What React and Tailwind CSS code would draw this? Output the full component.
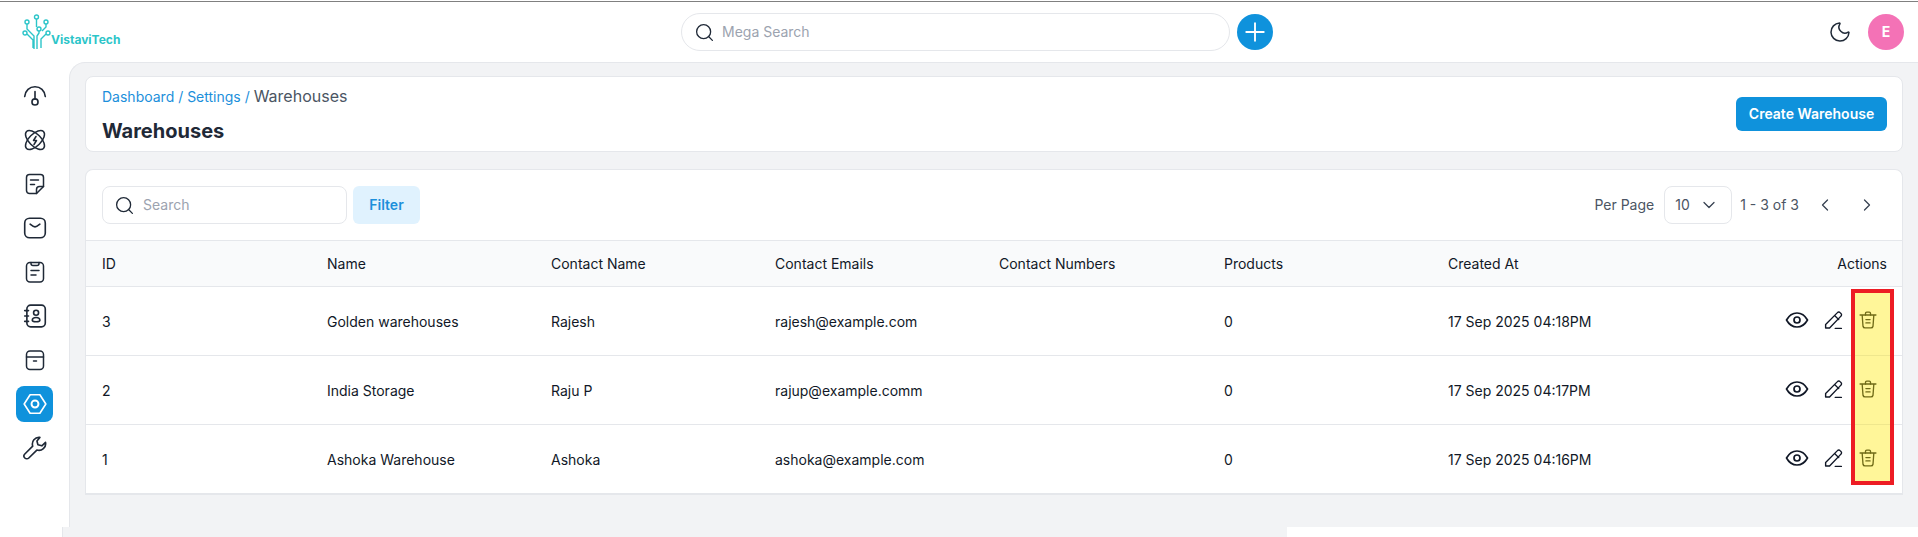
import React from 'react';
import { Search, Plus, Moon, ChevronDown, ChevronLeft, ChevronRight } from 'lucide-react';

const Svg = ({ children, size = 24, width = 1.5, className = '' }) => (
  <svg
    width={size}
    height={size}
    viewBox="0 0 24 24"
    fill="none"
    stroke="currentColor"
    strokeWidth={width}
    strokeLinecap="round"
    strokeLinejoin="round"
    className={className}
  >
    {children}
  </svg>
);

const GaugeIcon = () => (
  <Svg size={26}>
    <path d="M2.500 12.500C3 7 7 3.500 12 3.500s9 3.500 9.500 9" />
    <path d="M12 8v7" />
    <circle cx="12" cy="17.500" r="2.800" />
  </Svg>
);

const AtomIcon = () => (
  <Svg>
    <ellipse cx="12" cy="12" rx="12" ry="6" transform="rotate(45 12 12)" />
    <ellipse cx="12" cy="12" rx="12" ry="6" transform="rotate(-45 12 12)" />
    <path d="M13 8.500l-2.500 4h3l-2.500 4" />
  </Svg>
);

const NoteIcon = () => (
  <Svg>
    <path d="M13.500 21.500H6.500a3 3 0 0 1-3-3v-13a3 3 0 0 1 3-3h11a3 3 0 0 1 3 3v9z" />
    <path d="M20.500 14.500h-4a3 3 0 0 0-3 3v4" />
    <path d="M7.500 8h8M7.500 12.500h4" />
  </Svg>
);

const MailIcon = () => (
  <Svg size={26}>
    <rect x="2.500" y="3" width="19" height="18" rx="4.500" />
    <path d="M7.500 8.500c1.500 1.200 3 2.500 4.500 2.500s3-1.300 4.500-2.500" />
  </Svg>
);

const ClipboardIcon = () => (
  <Svg>
    <rect x="3.500" y="2.500" width="17" height="19.500" rx="3.500" />
    <path d="M8 2.500v1a2 2 0 0 0 2 2h4a2 2 0 0 0 2-2v-1" />
    <path d="M8 10.500h8M8 15h5" />
  </Svg>
);

const ContactIcon = () => (
  <Svg size={26}>
    <rect x="4.500" y="2" width="17" height="20" rx="3.500" />
    <circle cx="13" cy="9" r="2.300" />
    <path d="M9.500 16c0-1.800 1.500-2.600 3.500-2.600s3.500.8 3.500 2.600-7 1.800-7 0z" />
    <path d="M2.500 7h3.500M2.500 12h3.500M2.500 17h3.500" />
  </Svg>
);

const BoxIcon = () => (
  <Svg>
    <rect x="3.500" y="3" width="17" height="18.500" rx="3.500" />
    <path d="M3.500 9h17M10.500 13h3" />
  </Svg>
);

const HexIcon = () => (
  <Svg size={26}>
    <path d="M7.500 3.500h9L22 12l-5.500 8.500h-9L2 12z" />
    <circle cx="12" cy="12" r="3.200" strokeWidth="1.800" />
  </Svg>
);

const WrenchIcon = () => (
  <Svg size={26}>
    <path d="M16.500 2.200a6.200 6.200 0 0 0-6.600 8.100l-7.300 7.200a2.600 2.600 0 0 0 3.700 3.700l7.400-7.300a6.200 6.200 0 0 0 8-7.100l-3.400 3.200-3.600-1-.9-3.400z" />
  </Svg>
);

const EyeIcon = () => (
  <Svg size={24} width={1.7}>
    <path d="M1.500 12C4 7.500 7.500 5 12 5s8 2.500 10.500 7c-2.500 4.500-6 7-10.500 7s-8-2.500-10.500-7z" />
    <circle cx="12" cy="12" r="3" />
  </Svg>
);

const PencilIcon = () => (
  <Svg size={21} width={1.6}>
    <path d="M3 20.500v-4L14.500 5l2-2a2 2 0 0 1 3 0l1 1a2 2 0 0 1 0 3L7.500 20.500z" />
    <path d="M13.500 6.500l4.500 4.500M14 21h7" />
  </Svg>
);

const TrashIcon = () => (
  <Svg size={20} width={1.6}>
    <path d="M2.500 6h19M5 6l1 13.500a2.500 2.500 0 0 0 2.500 2h7a2.500 2.500 0 0 0 2.500-2L19 6" />
    <path d="M9 6V4a1.500 1.500 0 0 1 1.500-1.500h3A1.500 1.500 0 0 1 15 4v2" />
    <path d="M9.500 11.500h5M9.500 15.500h5" />
  </Svg>
);

const Logo = () => (
  <div className="flex items-end w-[100px] h-[38px] text-[#2cc5c9]">
    <svg width="30" height="37" viewBox="0 0 30 37" fill="none" stroke="currentColor" strokeWidth="1.4" className="shrink-0">
      <circle cx="14.500" cy="3" r="2" />
      <circle cx="5" cy="8" r="2" />
      <circle cx="24" cy="8" r="2" />
      <circle cx="17" cy="15" r="2" />
      <circle cx="3" cy="19" r="2" />
      <circle cx="26" cy="19" r="2" />
      <path d="M14.500 5v8M5 10v5l7 7v13M24 10v3l-4 4M17 17v2l-2 3v13M5 20l6 6v8M24 20l-5 5v9" />
    </svg>
    <span className="-ml-[1px] mb-[2px] text-xs font-bold leading-[18px]">VistaviTech</span>
  </div>
);

const navIcons = [GaugeIcon, AtomIcon, NoteIcon, MailIcon, ClipboardIcon, ContactIcon, BoxIcon, HexIcon, WrenchIcon];

const rows = [
  { id: 3, name: 'Golden warehouses', contact: 'Rajesh', email: 'rajesh@example.com', created: '17 Sep 2025 04:18PM' },
  { id: 2, name: 'India Storage', contact: 'Raju P', email: 'rajup@example.comm', created: '17 Sep 2025 04:17PM' },
  { id: 1, name: 'Ashoka Warehouse', contact: 'Ashoka', email: 'ashoka@example.com', created: '17 Sep 2025 04:16PM' },
];

const cols = 'grid grid-cols-[225px_224px_224px_224px_225px_224px_1fr] items-center pl-4 pr-[15px]';

export default function App() {
  return (
    <div className="h-[537px] w-full overflow-hidden bg-white flex flex-col text-[#111827]" style={{ fontFamily: 'Inter, sans-serif' }}>
      <div className="h-[1px] mt-[1px] bg-[#808080] shrink-0" />

      <header className="h-[60px] shrink-0 flex items-center relative pl-[22px] pr-[14px]">
        <Logo />
        <div className="flex items-center ml-[559px] gap-[7px]">
          <div className="w-[549px] h-[38px] rounded-full border border-[#e5e7eb] flex items-center pl-[12px] gap-[7px]">
            <Search size={21} strokeWidth={1.5} className="text-[#1f2937]" />
            <span className="text-sm text-[#9ca3af]">Mega Search</span>
          </div>
          <button className="w-9 h-9 rounded-full bg-[#0f92dc] flex items-center justify-center text-white">
            <Plus size={30} strokeWidth={1.5} />
          </button>
        </div>
        <div className="ml-auto flex items-center gap-[16px]">
          <Moon size={24} strokeWidth={1.5} className="text-[#1f2937]" />
          <div className="w-9 h-9 rounded-full bg-[#f472b6] text-white text-sm font-bold flex items-center justify-center">E</div>
        </div>
      </header>

      <div className="flex flex-1 min-h-0">
        <aside className="w-[69px] shrink-0 flex flex-col items-start pt-[16px] pl-[16px] gap-[8px]">
          {navIcons.map((Icon, i) => (
            <div
              key={i}
              className={`w-[37px] h-9 rounded-lg flex items-center justify-center ${i === 7 ? 'bg-[#0f92dc] text-white' : 'text-[#1f2937]'}`}
            >
              <Icon />
            </div>
          ))}
        </aside>

        <main className="flex-1 min-w-0 bg-[#f2f3f5] border-l border-t border-[#e5e7eb] rounded-tl-2xl pl-[15px] pr-[15px] pt-[13px]">
          <div className="h-[76px] bg-white border border-[#e5e7eb] rounded-lg flex items-center justify-between pl-4 pr-[15px]">
            <div className="pt-[1px]">
              <div className="text-sm leading-5">
                <span className="text-[#1c8fdb]">Dashboard / Settings / </span>
                <span className="text-base text-[#4b5563]">Warehouses</span>
              </div>
              <h1 className="mt-[9px] text-xl leading-7 font-bold text-[#1f2937]">Warehouses</h1>
            </div>
            <button className="h-[34px] w-[151px] rounded-md bg-[#0f92dc] text-white text-sm font-semibold">Create Warehouse</button>
          </div>

          <div className="relative mt-[17px] bg-white border-x border-t border-b-2 border-[#e5e7eb] rounded-t-lg">
            <div className="h-[70px] flex items-center justify-between pl-4 pr-4">
              <div className="flex items-center gap-[6px]">
                <div className="w-[245px] h-[38px] border border-[#e5e7eb] rounded-lg flex items-center pl-[11px] gap-[8px]">
                  <Search size={21} strokeWidth={1.5} className="text-[#1f2937]" />
                  <span className="text-sm text-[#9ca3af]">Search</span>
                </div>
                <button className="w-[67px] h-[38px] rounded-md bg-[#e0f2fe] text-[#1c8fdb] text-sm font-semibold">Filter</button>
              </div>
              <div className="flex items-center text-sm text-[#4b5563]">
                <span>Per Page</span>
                <div className="ml-[10px] w-[68px] h-[38px] border border-[#e5e7eb] rounded-lg flex items-center justify-between pl-[10px] pr-[12px]">
                  <span>10</span>
                  <ChevronDown size={20} strokeWidth={1.5} className="text-[#374151]" />
                </div>
                <span className="ml-[8px]">1 - 3 of 3</span>
                <div className="ml-[16px] flex items-center gap-[22px] pr-[9px] text-[#374151]">
                  <ChevronLeft size={20} strokeWidth={1.5} />
                  <ChevronRight size={20} strokeWidth={1.5} />
                </div>
              </div>
            </div>

            <div className={`${cols} h-[47px] bg-[#f9fafb] border-y border-[#e5e7eb] text-sm`}>
              <div>ID</div>
              <div>Name</div>
              <div>Contact Name</div>
              <div>Contact Emails</div>
              <div>Contact Numbers</div>
              <div>Products</div>
              <div className="flex justify-between">
                <span>Created At</span>
                <span>Actions</span>
              </div>
            </div>

            {rows.map((r, i) => (
              <div key={r.id} className={`${cols} pt-[2px] text-sm ${i < 2 ? 'h-[69px] border-b border-[#e5e7eb]' : 'h-[68px]'}`}>
                <div>{r.id}</div>
                <div>{r.name}</div>
                <div>{r.contact}</div>
                <div>{r.email}</div>
                <div />
                <div>0</div>
                <div className="flex items-center justify-between">
                  <span>{r.created}</span>
                  <div className="flex items-center gap-[14px] pr-[9px] mb-[4px]">
                    <EyeIcon />
                    <PencilIcon />
                    <TrashIcon />
                  </div>
                </div>
              </div>
            ))}

            {/* red annotation box drawn over the delete column */}
            <div className="absolute right-[8px] bottom-[8px] w-[43px] h-[196px] border-[4px] border-[#ed1c24] bg-[#ffe900]/40" />
          </div>
        </main>
      </div>

      <div className="h-[10px] shrink-0 ml-[62px] w-[1225px] bg-[#f2f3f5] border-l border-[#e5e7eb]" />
    </div>
  );
}
